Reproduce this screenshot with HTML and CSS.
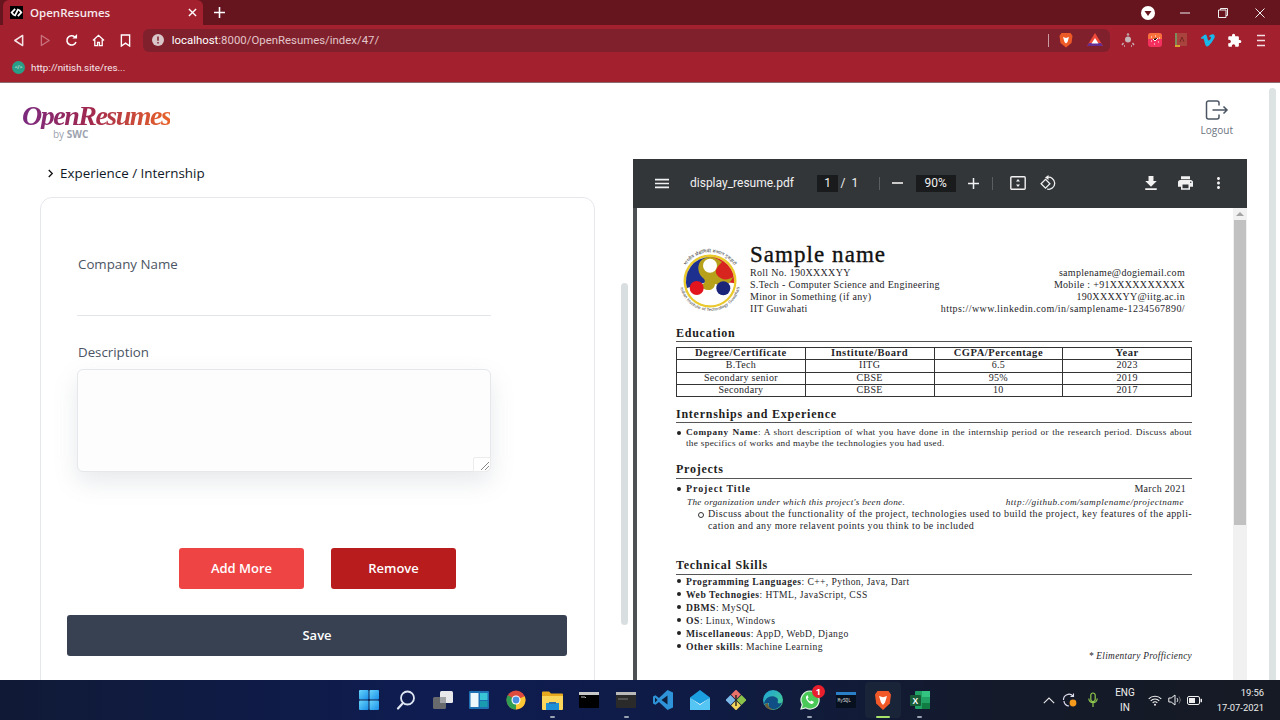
FILE: index.html
```html
<!DOCTYPE html>
<html lang="en">
<head>
<meta charset="utf-8">
<title>OpenResumes</title>
<link rel="stylesheet" href="styles.css">
</head>
<body>
<div class="tabstrip">
  <div class="tab">
    <span class="favicon"><svg viewBox="0 0 14 12" width="13" height="11"><path d="M5.5 2 1.8 6l2.4 3M8.500 10l3.700-4-2.400-3M9 2 5 10" fill="none" stroke="#fff" stroke-width="2"/></svg></span>
    <span class="tab-title">OpenResumes</span>
    <svg class="tab-close" viewBox="0 0 10 10" width="9" height="9"><path d="M1 1l8 8M9 1l-8 8" stroke="#fff" stroke-width="1.500"/></svg>
  </div>
  <svg class="newtab" viewBox="0 0 12 12" width="11" height="11"><path d="M6 0v12M0 6h12" stroke="#fff" stroke-width="1.700"/></svg>
  <div class="window-controls">
    <span class="profile"><svg viewBox="0 0 14 14" width="14" height="14"><circle cx="7" cy="7" r="7" fill="#fff"/><path d="M3.500 5h7L7 10z" fill="#66151f"/></svg></span>
    <span class="winbtn"><svg viewBox="0 0 10 10" width="10" height="10"><path d="M0 5h10" stroke="#eee" stroke-width="1"/></svg></span>
    <span class="winbtn"><svg viewBox="0 0 10 10" width="10" height="10"><path d="M.5 2h7.500v7.500H.5zM2.500 2V.5h7v7H8" fill="none" stroke="#eee" stroke-width="1"/></svg></span>
    <span class="winbtn"><svg viewBox="0 0 10 10" width="10" height="10"><path d="M.5.5l9 9M9.500.5l-9 9" stroke="#eee" stroke-width="1"/></svg></span>
  </div>
</div>

<div class="toolbar">
  <span class="navbtn"><svg viewBox="0 0 12 14" width="11" height="13"><path d="M10.500 1.500v11L2 7z" fill="none" stroke="#f3e4e6" stroke-width="1.700" stroke-linejoin="round"/></svg></span>
  <span class="navbtn"><svg viewBox="0 0 12 14" width="11" height="13"><path d="M1.500 1.500v11L10 7z" fill="none" stroke="#c9727d" stroke-width="1.400" stroke-linejoin="round"/></svg></span>
  <span class="navbtn"><svg viewBox="0 0 14 14" width="13" height="13"><path d="M11.800 8.500A5 5 0 1 1 10.500 3.200" fill="none" stroke="#fff" stroke-width="1.700"/><path d="M8 4.800h5V0z" fill="#fff"/></svg></span>
  <span class="navbtn"><svg viewBox="0 0 14 14" width="13" height="13"><path d="M1 7l6-5.500L13 7M3 6v6.500h3V9h2v3.500h3V6" fill="none" stroke="#fff" stroke-width="1.400"/></svg></span>
  <span class="navbtn"><svg viewBox="0 0 12 14" width="11" height="13"><path d="M1.500 1h9v12L6 9.800 1.500 13z" fill="none" stroke="#fff" stroke-width="1.500"/></svg></span>
  <div class="omnibox">
    <svg class="omni-info" viewBox="0 0 12 12" width="12" height="12"><circle cx="6" cy="6" r="6" fill="#d9c6c9"/><path d="M6 2.500v4.200M6 8v1.500" stroke="#80202c" stroke-width="1.500"/></svg>
    <span class="url"><span class="url-host">localhost</span>:8000/OpenResumes/index/47/</span>
    <span class="omni-sep"></span>
    <svg class="omni-brave" viewBox="0 0 14 16" width="14" height="16"><path d="M2.500 1h9l2 3-1 7L7 15.500 1.500 11l-1-7z" fill="#ee5a25"/><path d="M4 5l3 1 3-1-1.500 5L7 11.500 5.500 10z" fill="#fff"/></svg>
    <svg class="omni-bat" viewBox="0 0 16 14" width="16" height="14"><path d="M8 0l8 13H0z" fill="#ee4a3a"/><path d="M0 13l2-3h12l2 3z" fill="#662d91"/><path d="M8 5l3.500 5.500h-7z" fill="#fff"/></svg>
  </div>
  <span class="ext ext-first"><svg viewBox="0 0 14 14" width="14" height="14"><circle cx="7" cy="6.500" r="3" fill="#c6b8ba"/><circle cx="7" cy="1.500" r="1.300" fill="#b9a4a7"/><path d="M1 12l1.500-2M13 12l-1.500-2M3 13h1M10 13h1" stroke="#c9b7ba" stroke-width="1.300"/></svg></span>
  <span class="ext"><svg viewBox="0 0 14 14" width="14" height="14"><rect width="14" height="14" rx="3" fill="#f4305f"/><path d="M0 3a3 3 0 0 1 3-3h8a3 3 0 0 1 3 3v3H0z" fill="#f8713d"/><path d="M3 4h1M7 3h1M11 5h1M3 8h1M10 9h1M6 11h1M5 6l2 2 3-3" stroke="#fff" stroke-width="1"/></svg></span>
  <span class="ext"><svg viewBox="0 0 12 14" width="12" height="14"><rect width="12" height="13" fill="#a8433e"/><rect width="2" height="13" fill="#7f8a5a"/><path d="M5 9l2-5 2 5" fill="none" stroke="#7a2522" stroke-width="1"/><rect y="12" width="5" height="2" fill="#d9a531"/></svg></span>
  <span class="ext"><svg viewBox="0 0 14 13" width="14" height="13"><path d="M0 3.500C2 2 3.500.5 4.500.5c2 0 1.800 6 3 6 1 0 2.500-2 2.500-3 0-1-1.500-1-2.200-.5C8.500 1 10.500 0 12 .3c2 .4 2.200 2.500 1 4.500-1.500 2.700-5 7.700-7 7.700-2.500 0-2.500-8-4-8-.6 0-1 .5-1.300.7z" fill="#1ab7ea"/></svg></span>
  <span class="ext"><svg viewBox="0 0 24 24" width="15" height="15"><path d="M20.500 11H19V7c0-1.100-.9-2-2-2h-4V3.500a2.500 2.500 0 0 0-5 0V5H4c-1.100 0-2 .9-2 2v3.800h1.500c1.500 0 2.700 1.200 2.700 2.700S5 16.200 3.500 16.200H2V20c0 1.100.9 2 2 2h3.800v-1.500c0-1.500 1.200-2.700 2.700-2.700s2.700 1.200 2.700 2.700V22H17c1.100 0 2-.9 2-2v-4h1.500a2.500 2.500 0 0 0 0-5z" fill="#fff"/></svg></span>
  <span class="ext"><svg viewBox="0 0 8 13" width="8" height="13"><path d="M0 1.500h8M0 6.500h8M0 11.500h8" stroke="#f2dfe1" stroke-width="1.400"/></svg></span>
</div>

<div class="bookmarks">
  <span class="bm-icon">&lt;/&gt;</span>
  <span class="bm-label">http://nitish.site/res...</span>
</div>

<div class="page">
  <div class="page-content">
    <header class="site-header">
      <div class="logo">
        <div class="logo-name">OpenResumes</div>
        <div class="logo-by">by <b>SWC</b></div>
      </div>
      <div class="logout">
        <svg viewBox="0 0 24 20" width="24" height="20"><path d="M12 1H3.500A2 2 0 0 0 1.500 3v14a2 2 0 0 0 2 2H12a2 2 0 0 0 2-2v-2.500M14 5.500V3a2 2 0 0 0-2-2" fill="none" stroke="#4b5563" stroke-width="1.500"/><path d="M7.500 10H22M18.500 6.500 22 10l-3.500 3.500" fill="none" stroke="#4b5563" stroke-width="1.500"/></svg>
        <span>Logout</span>
      </div>
    </header>
    <div class="workspace">
      <section class="form-col">
        <div class="section-title">
          <svg viewBox="0 0 8 10" width="7" height="9"><path d="M2 1l4 4-4 4" fill="none" stroke="#111" stroke-width="1.500"/></svg>
          <span>Experience / Internship</span>
        </div>
        <div class="card">
          <label class="field-label first">Company Name</label>
          <div class="line-input"></div>
          <label class="field-label second">Description</label>
          <div class="desc-wrap">
            <textarea class="desc" aria-label="Description"></textarea>
            <span class="resize-corner"><svg viewBox="0 0 10 10" width="10" height="10"><path d="M1 9 9 1M5 9 9 5" stroke="#888" stroke-width="1"/></svg></span>
          </div>
          <div class="btn-row">
            <button class="btn btn-add">Add More</button>
            <button class="btn btn-remove">Remove</button>
          </div>
          <button class="btn btn-save">Save</button>
        </div>
      </section>
      <div class="form-scroll"></div>
      <section class="viewer">
        <div class="viewer-bar">
          <svg class="vb-menu" viewBox="3 6 18 12" width="14" height="11"><path d="M3 18h18v-2H3v2zm0-5h18v-2H3v2zm0-7v2h18V6H3z" fill="#f1f1f1"/></svg>
          <span class="vb-title">display_resume.pdf</span>
          <span class="vb-page">1</span>
          <span class="vb-slash">/</span>
          <span class="vb-total">1</span>
          <span class="vb-sep sep-a"></span>
          <svg class="vb-minus" viewBox="0 0 11 2" width="11" height="2"><path d="M0 1h11" stroke="#f1f1f1" stroke-width="1.600"/></svg>
          <span class="vb-zoom">90%</span>
          <svg class="vb-plus" viewBox="0 0 11 11" width="11" height="11"><path d="M0 5.500h11M5.500 0v11" stroke="#f1f1f1" stroke-width="1.500"/></svg>
          <span class="vb-sep sep-b"></span>
          <svg class="vb-fit" viewBox="0 0 16 14" width="16" height="14"><rect x=".8" y=".8" width="14.400" height="12.400" rx="1" fill="none" stroke="#f1f1f1" stroke-width="1.400"/><path d="M8 3l2 2.500H6zM8 11 6 8.500h4z" fill="#f1f1f1"/></svg>
          <svg class="vb-rot" viewBox="0 0 16 16" width="16" height="16"><path d="M7 2.500a6 6 0 1 1 0 11.500" fill="none" stroke="#f1f1f1" stroke-width="1.300"/><path d="M8.500 0v5L5 2.500z" fill="#f1f1f1"/><rect x="2.400" y="5.600" width="6.200" height="6.200" transform="rotate(45 5.500 8.700)" fill="none" stroke="#f1f1f1" stroke-width="1.300"/></svg>
          <svg class="vb-down" viewBox="5 3 14 17" width="12" height="14"><path d="M19 9h-4V3H9v6H5l7 7 7-7zM5 18v2h14v-2H5z" fill="#f1f1f1"/></svg>
          <svg class="vb-print" viewBox="2 3 20 18" width="15" height="14"><path d="M19 8H5c-1.660 0-3 1.340-3 3v6h4v4h12v-4h4v-6c0-1.660-1.340-3-3-3zm-3 11H8v-5h8v5zm3-7c-.55 0-1-.45-1-1s.45-1 1-1 1 .45 1 1-.45 1-1 1zm-1-9H6v4h12V3z" fill="#f1f1f1"/></svg>
          <svg class="vb-more" viewBox="10 4 4 16" width="3" height="12"><path d="M12 8c1.100 0 2-.9 2-2s-.9-2-2-2-2 .9-2 2 .9 2 2 2zm0 2c-1.100 0-2 .9-2 2s.9 2 2 2 2-.9 2-2-.9-2-2-2zm0 6c-1.100 0-2 .9-2 2s.9 2 2 2 2-.9 2-2-.9-2-2-2z" fill="#f1f1f1"/></svg>
        </div>
        <div class="viewer-body">
          <article class="sheet">
            <div class="cv-head">
              <svg class="cv-logo" viewBox="0 0 66 66" width="66" height="66">
                <defs>
                  <path id="ring-top" d="M5 41A29 29 0 1 1 61 41"/>
                  <path id="ring-bottom" d="M3 38A30.500 30.500 0 0 0 63 38"/>
                </defs>
                <text class="cv-logo-text" text-anchor="middle"><textPath href="#ring-top" startOffset="50%">भारतीय प्रौद्योगिकी संस्थान गुवाहाटी</textPath></text>
                <text class="cv-logo-text" text-anchor="middle"><textPath href="#ring-bottom" startOffset="50%">Indian Institute of Technology Guwahati</textPath></text>
                <circle cx="33" cy="33" r="26.500" fill="#e9c92b"/>
                <circle cx="33" cy="33" r="24" fill="#fff"/>
                <path d="M33 9A24 24 0 0 1 57 35L33 33z" fill="#d8241f"/>
                <path d="M33 9A24 24 0 0 0 10 40L33 33z" fill="#1d2f8f"/>
                <path d="M10 40A24 24 0 0 0 57 35C52 47 39 47 33 39 27 47 15 47 10 40z" fill="#fff"/>
                <path d="M33 9C19 10 19 24 26 30 30 33 27 38 21 36 27 44 37 44 38 36 46 39 53 37 56 29 50 33 44 32 40 27 36 22 43 16 45 14 41 11 37 9 33 9z" fill="#b7a11a"/>
                <circle cx="33" cy="17.700" r="7" fill="#fff"/>
                <circle cx="19.700" cy="40" r="7" fill="#e2141d"/>
                <circle cx="46.300" cy="40.300" r="7" fill="#1a2478"/>
              </svg>
              <div class="cv-id">
                <h1 class="cv-name">Sample name</h1>
                <div class="cv-rows">
                  <div class="cv-row"><span>Roll No. 190XXXXYY</span><span>samplename@dogiemail.com</span></div>
                  <div class="cv-row"><span>S.Tech - Computer Science and Engineering</span><span>Mobile : +91XXXXXXXXXX</span></div>
                  <div class="cv-row"><span>Minor in Something (if any)</span><span>190XXXXYY@iitg.ac.in</span></div>
                  <div class="cv-row"><span>IIT Guwahati</span><span class="cv-link">https://www.linkedin.com/in/samplename-1234567890/</span></div>
                </div>
              </div>
            </div>

            <h2 class="cv-h edu">Education</h2>
            <table class="cv-table">
              <tr><th>Degree/Certificate</th><th>Institute/Board</th><th>CGPA/Percentage</th><th>Year</th></tr>
              <tr><td>B.Tech</td><td>IITG</td><td>6.5</td><td>2023</td></tr>
              <tr><td>Secondary senior</td><td>CBSE</td><td>95%</td><td>2019</td></tr>
              <tr><td>Secondary</td><td>CBSE</td><td>10</td><td>2017</td></tr>
            </table>

            <h2 class="cv-h intern">Internships and Experience</h2>
            <div class="cv-item"><span class="line-just"><b>Company Name</b>: A short description of what you have done in the internship period or the research period. Discuss about</span><span class="line-plain">the specifics of works and maybe the technologies you had used.</span></div>

            <h2 class="cv-h proj">Projects</h2>
            <div class="cv-item first-proj"><div class="cv-row pr6"><b class="proj-title">Project Title</b><span>March 2021</span></div></div>
            <div class="cv-org"><i>The organization under which this project's been done.</i><i class="org-link">http://github.com/samplename/projectname</i></div>
            <div class="cv-sub"><span class="line-plain">Discuss about the functionality of the project, technologies used to build the project, key features of the appli-</span><span class="line-plain">cation and any more relavent points you think to be included</span></div>

            <h2 class="cv-h skills">Technical Skills</h2>
            <ul class="cv-skills">
              <li><b>Programming Languages</b>: C++, Python, Java, Dart</li>
              <li><b>Web Technogies</b>: HTML, JavaScript, CSS</li>
              <li><b>DBMS</b>: MySQL</li>
              <li><b>OS</b>: Linux, Windows</li>
              <li><b>Miscellaneous</b>: AppD, WebD, Django</li>
              <li><b>Other skills</b>: Machine Learning</li>
            </ul>
            <div class="cv-note"><i>* Elimentary Profficiency</i></div>
          </article>
          <div class="viewer-scroll">
            <span class="vs-arrow"></span>
            <span class="vs-thumb"></span>
          </div>
        </div>
      </section>
    </div>
  </div>
  <div class="page-scroll"></div>
</div>

<footer class="taskbar">
  <div class="task-icons">
    <span class="ti"><svg viewBox="0 0 20 20" width="20" height="20"><defs><linearGradient id="win" x1="0" y1="0" x2="1" y2="1"><stop offset="0" stop-color="#67d5fb"/><stop offset="1" stop-color="#1a8ee8"/></linearGradient></defs><rect width="9.500" height="9.500" rx="1" fill="url(#win)"/><rect x="10.500" width="9.500" height="9.500" rx="1" fill="url(#win)"/><rect y="10.500" width="9.500" height="9.500" rx="1" fill="url(#win)"/><rect x="10.500" y="10.500" width="9.500" height="9.500" rx="1" fill="url(#win)"/></svg></span>
    <span class="ti"><svg viewBox="0 0 20 20" width="20" height="20"><circle cx="11.500" cy="8" r="6.500" fill="none" stroke="#dfe6f2" stroke-width="1.800"/><path d="M7 13l-5 5.500" stroke="#dfe6f2" stroke-width="2.200" stroke-linecap="round"/></svg></span>
    <span class="ti"><svg viewBox="0 0 20 20" width="20" height="20"><rect x="0" y="7" width="13" height="12" rx="1.500" fill="#68696d"/><rect x="7" y="1" width="13" height="12" rx="1.500" fill="#e9e9ec"/><rect x="7" y="7" width="6" height="6" fill="#a3a4a8"/></svg></span>
    <span class="ti"><svg viewBox="0 0 20 20" width="20" height="20"><rect y="1" width="20" height="18" rx="1" fill="#1f6fb5"/><rect x="1.500" y="3" width="8" height="14" fill="#eef6fc"/><rect x="11" y="3" width="7.500" height="7" fill="#38c6d6"/><rect x="11" y="11" width="7.500" height="6" fill="#1a9cb0"/></svg></span>
    <span class="ti"><svg viewBox="0 0 20 20" width="20" height="20"><circle cx="10" cy="10" r="9.500" fill="#dd4b3e"/><path d="M10 10 18.700 6.200A9.500 9.500 0 0 1 10 19.500z" fill="#fcc934"/><path d="M10 10 10 19.500A9.500 9.500 0 0 1 1.800 5.200z" fill="#2f9e52"/><circle cx="10" cy="10" r="4.500" fill="#fff"/><circle cx="10" cy="10" r="3.400" fill="#4a90e2"/></svg></span>
    <span class="ti ti-run"><svg viewBox="0 0 21 20" width="21" height="20"><path d="M0 2.500a1 1 0 0 1 1-1h6l2 2h11a1 1 0 0 1 1 1V8H0z" fill="#e8a91e"/><path d="M0 6h21v13a1 1 0 0 1-1 1H1a1 1 0 0 1-1-1z" fill="#fbd65a"/><path d="M4 13h13v7H4z" fill="#1c90d6"/><rect x="7" y="12" width="7" height="2" fill="#2f6fa8"/></svg></span>
    <span class="ti"><svg viewBox="0 0 20 16" width="20" height="16"><rect width="20" height="16" rx="1" fill="#000"/><rect width="20" height="3" fill="#c8c8c8"/><path d="M2 5h4M6 5l1 1" stroke="#bbb" stroke-width="1"/></svg></span>
    <span class="ti ti-run"><svg viewBox="0 0 20 16" width="20" height="16"><rect width="20" height="16" rx="1" fill="#2a2a2a"/><rect width="20" height="3" fill="#b9b9b9"/><path d="M2 7h10" stroke="#777" stroke-width="1"/></svg></span>
    <span class="ti"><svg viewBox="0 0 20 20" width="20" height="20"><path d="M14.500 0 20 2.500v15L14.500 20 6 12l-3.500 2.800L0 13.500v-7L2.500 5.200 6 8z" fill="#2e93d8"/><path d="M14.500 5.500v9L8.500 10z" fill="#0f1c3a"/><path d="M2 7.500 4.500 10 2 12.500z" fill="#0f1c3a"/></svg></span>
    <span class="ti"><svg viewBox="0 0 20 20" width="20" height="20"><path d="M0 7.500 10 0l10 7.500V20H0z" fill="#1c9fe0"/><path d="M0 8l10 7 10-7v12H0z" fill="#55c5f3"/><path d="M0 8l10 6 10-6-10 7z" fill="#fff"/></svg></span>
    <span class="ti"><svg viewBox="0 0 20 20" width="20" height="20"><rect x="6.500" y="1" width="7" height="7" transform="rotate(45 10 4.500)" fill="#e8726b"/><rect x="1" y="6.500" width="7" height="7" transform="rotate(45 4.500 10)" fill="#7ab8ea"/><rect x="12" y="6.500" width="7" height="7" transform="rotate(45 15.500 10)" fill="#8bc34a"/><rect x="6.500" y="12" width="7" height="7" transform="rotate(45 10 15.500)" fill="#f2d45c"/><path d="M10 5v11" stroke="#222" stroke-width="1.400"/></svg></span>
    <span class="ti"><svg viewBox="0 0 20 20" width="20" height="20"><defs><linearGradient id="edge" x1="0" y1="0" x2="1" y2="1"><stop offset="0" stop-color="#1da1d8"/><stop offset="1" stop-color="#4bd28a"/></linearGradient></defs><circle cx="10" cy="10" r="10" fill="url(#edge)"/><path d="M1 14C2 7 9 4 14 8c2 2 0 4 1 5 1 .8 3 .5 4-1-1 5-6 8-10 7-3-.8-4-3-3-6-2 0-4 .5-5 1z" fill="#0f4f85"/><path d="M5 13c0 4 3 6 6 6-5 2-9-2-9-5z" fill="#6c5d3a"/></svg></span>
    <span class="ti ti-run"><svg viewBox="0 0 20 20" width="20" height="20"><path d="M10 1a9 9 0 0 0-7.700 13.600L1 19l4.600-1.200A9 9 0 1 0 10 1z" fill="#4ac959" stroke="#e9f5e9" stroke-width="1.200"/><path d="M7 5.500c-1.500 1-1.500 3 .5 5.500s4 3.500 5.500 2.500l1-1.500-2.500-1.500-1 1c-1 0-3-2-3-3l1-1-1-2.500z" fill="#fff"/></svg><span class="badge">1</span></span>
    <span class="ti"><svg viewBox="0 0 20 16" width="20" height="16"><rect width="20" height="16" fill="#06101e"/><rect width="20" height="3" fill="#2a7fc9"/><text class="mysql" x="1.500" y="9.500">MySQL</text></svg></span>
    <span class="ti ti-active"><svg viewBox="0 0 18 20" width="18" height="20"><path d="M3.500 1h11l2.500 3.500-1.200 9L9 20l-6.800-6.500L1 4.500z" fill="#f15a28"/><path d="M5 6l4 1.200L13 6l-2 6.500L9 15l-2-2.500z" fill="#fff"/></svg></span>
    <span class="ti ti-run"><svg viewBox="0 0 20 20" width="20" height="20"><rect x="5" y="1" width="15" height="18" rx="1" fill="#21a366"/><rect x="12" y="1" width="8" height="6" fill="#33c481"/><rect x="12" y="13" width="8" height="6" fill="#107c41"/><rect y="5" width="11" height="11" rx="1" fill="#185c37"/><text class="xl" x="2.500" y="13.500">X</text></svg></span>
  </div>
  <div class="tray">
    <svg class="tr-chev" viewBox="0 0 12 7" width="12" height="7"><path d="M.8 6.200 6 1l5.200 5.200" fill="none" stroke="#e8e8e8" stroke-width="1.100"/></svg>
    <svg class="tr-sync" viewBox="0 0 16 16" width="16" height="16"><path d="M1.500 8a5.500 5.500 0 0 1 9.500-4M13 8" fill="none" stroke="#dde" stroke-width="1.200"/><path d="M2 9a5 5 0 0 0 5 5" fill="none" stroke="#dde" stroke-width="1.200"/><path d="M11.500 1.500v3h-3" fill="none" stroke="#dde" stroke-width="1.100"/><circle cx="11" cy="11" r="3.400" fill="#f59a1d"/></svg>
    <svg class="tr-mic" viewBox="0 0 10 16" width="10" height="16"><rect x="2.800" y="1" width="4.400" height="8.500" rx="2.200" fill="none" stroke="#8fc84e" stroke-width="1.200"/><path d="M.8 6.500a4.200 4.200 0 0 0 8.400 0M5 11v4" fill="none" stroke="#8fc84e" stroke-width="1.200"/></svg>
    <div class="tr-lang"><span>ENG</span><span>IN</span></div>
    <svg class="tr-wifi" viewBox="0 0 14 11" width="14" height="11"><path d="M.7 3.800a9 9 0 0 1 12.600 0M2.700 5.800a6 6 0 0 1 8.600 0M4.700 7.800a3 3 0 0 1 4.600 0" fill="none" stroke="#eee" stroke-width="1.100"/><circle cx="7" cy="9.800" r="1" fill="#eee"/></svg>
    <svg class="tr-vol" viewBox="0 0 15 12" width="15" height="12"><path d="M.8 4v4h2.400L7 11V1L3.200 4z" fill="none" stroke="#eee" stroke-width="1"/><path d="M9 4a3 3 0 0 1 0 4" fill="none" stroke="#eee" stroke-width=".9"/><path d="M11 2.500a5.500 5.500 0 0 1 0 7" fill="none" stroke="#777" stroke-width=".9"/></svg>
    <svg class="tr-bat" viewBox="0 0 15 9" width="15" height="9"><rect x=".5" y=".5" width="12" height="8" rx="1.500" fill="none" stroke="#eee"/><rect x="2" y="2" width="6" height="5" fill="#eee"/><rect x="13.500" y="2.800" width="1.500" height="3.400" fill="#eee"/></svg>
    <div class="tr-clock"><span>19:56</span><span>17-07-2021</span></div>
  </div>
</footer>
</body>
</html>
```

FILE: styles.css
```css
* { box-sizing: border-box; }
html, body { margin: 0; padding: 0; }
body {
  width: 1280px;
  height: 720px;
  overflow: hidden;
  display: flex;
  flex-direction: column;
  background: #fff;
  font-family: "Open Sans", "Liberation Sans", sans-serif;
}

/* browser chrome */
.tabstrip {
  height: 25px;
  flex: none;
  display: flex;
  align-items: center;
  padding-left: 3px;
  background: #66151f;
  color: #fff;
}
.tab {
  width: 200px;
  height: 25px;
  display: flex;
  align-items: center;
  padding: 0 6px 0 7px;
  background: #a3202f;
  border-radius: 6px 6px 0 0;
}
.favicon {
  width: 13px;
  height: 13px;
  background: #000;
  display: flex;
  align-items: center;
  justify-content: center;
}
.tab-title { margin-left: 7px; font-size: 11.5px; font-weight: 600; flex: 1; color: #f7eaec; }
.newtab { margin-left: 11px; }
.window-controls { margin-left: auto; padding-right: 1px; display: flex; align-items: center; }
.profile { display: flex; margin-right: 12px; }
.winbtn { width: 37.500px; display: flex; justify-content: center; }
.toolbar {
  height: 30px;
  flex: none;
  display: flex;
  align-items: center;
  padding-left: 5px;
  background: #a3202f;
}
.navbtn { width: 26.750px; display: flex; justify-content: center; }
.omnibox {
  width: 967px;
  height: 23px;
  margin-left: 4px;
  display: flex;
  align-items: center;
  padding-left: 9px;
  background: #80202c;
  border-radius: 6px;
}
.url { margin-left: 8px; font-family: Roboto, sans-serif; font-size: 11.400px; color: #e2c5c9; }
.url-host { color: #fff; }
.omni-sep { margin-left: auto; width: 1px; height: 13px; background: #c99ca2; }
.omni-brave { margin-left: 10px; }
.omni-bat { margin-left: 14px; margin-right: 7px; }
.ext { width: 26.500px; display: flex; justify-content: center; }
.ext-first { margin-left: 5px; }
.bookmarks {
  height: 28px;
  flex: none;
  display: flex;
  align-items: center;
  padding: 0 0 2px 12px;
  background: #a3202f;
  border-bottom: 1px solid #8d6a70;
  color: #f7eaec;
}
.bm-icon {
  width: 13px;
  height: 13px;
  border-radius: 50%;
  background: #2a9d86;
  color: #fff;
  font-size: 5px;
  line-height: 13px;
  text-align: center;
}
.bm-label { margin-left: 6px; font-family: Roboto, sans-serif; font-size: 9.800px; }

/* page */
.page { flex: 1; min-height: 0; display: flex; overflow: hidden; }
.page-content { width: 1269px; flex: none; }
.page-scroll {
  width: 7px;
  margin-top: 5px;
  background: #dde2e3;
  border-radius: 4px 4px 0 0;
}
.site-header {
  height: 76px;
  display: flex;
  justify-content: space-between;
  padding: 20px 36px 0 22px;
}
.logo-name {
  font-family: "Liberation Serif", serif;
  font-style: italic;
  font-weight: 700;
  font-size: 28px;
  line-height: 26px;
  letter-spacing: -1.500px;
  background: linear-gradient(90deg, #7b2a80 0%, #a0284f 45%, #e8632a 100%);
  -webkit-background-clip: text;
  background-clip: text;
  color: transparent;
}
.logo-by { margin: 0 0 0 31px; font-size: 10px; line-height: 11px; color: #9ca3af; }
.logout {
  display: flex;
  flex-direction: column;
  align-items: center;
  margin-top: -3px;
  font-size: 10px;
  line-height: 14px;
  color: #6b7280;
  gap: 3px;
  padding-top: 0;
}
.workspace { display: flex; height: 521px; }
.form-col { width: 555px; margin-left: 40px; flex: none; }
.section-title {
  height: 38px;
  padding: 4px 0 0 7px;
  display: flex;
  align-items: flex-start;
  gap: 6px;
  font-size: 13.400px;
  line-height: 20px;
  font-weight: 500;
  color: #111827;
}
.section-title svg { margin-top: 6px; }
.card {
  height: 520px;
  border: 1px solid #e5e7eb;
  border-radius: 12px;
  padding: 0 0 0 36px;
}
.field-label { display: block; padding-left: 1px; font-size: 13.300px; line-height: 20px; color: #4b5563; }
.field-label.first { margin-top: 56px; }
.field-label.second { margin-top: 26px; }
.line-input { width: 414px; height: 42px; border-bottom: 1px solid #e2e5e9; }
.desc-wrap { position: relative; width: 414px; height: 103px; margin-top: 7px; }
.desc {
  display: block;
  width: 414px;
  height: 103px;
  border: 1px solid #e5e7eb;
  border-radius: 6px;
  background: #fdfdfd;
  box-shadow: 0 10px 25px rgba(100, 116, 130, .16);
  outline: none;
  resize: none;
}
.resize-corner {
  position: absolute;
  right: 0;
  bottom: 0;
  width: 18px;
  height: 15px;
  display: flex;
  align-items: flex-end;
  justify-content: flex-end;
  background: #fff;
  border: 1px solid #ececec;
  border-radius: 2px 0 6px 0;
}
.btn {
  display: block;
  height: 41px;
  padding-bottom: 2px;
  border: 0;
  border-radius: 3px;
  color: #fff;
  font-family: "Open Sans", sans-serif;
  font-size: 13px;
  font-weight: 600;
}
.btn-row { display: flex; gap: 27px; margin: 76px 0 0 102px; }
.btn-add { width: 125px; background: #ef4444; }
.btn-remove { width: 125px; background: #b91c1c; }
.btn-save { width: 500px; margin: 26px 0 0 -10px; background: #374151; }
.form-scroll {
  width: 7px;
  height: 342px;
  margin: 124px 5px 0 26px;
  flex: none;
  background: #d9dfe0;
  border-radius: 4px;
}

/* pdf viewer */
.viewer { width: 614px; flex: none; display: flex; flex-direction: column; background: #525659; }
.viewer-bar {
  height: 49px;
  flex: none;
  display: flex;
  align-items: center;
  padding-bottom: 1px;
  background: #323639;
  color: #f1f1f1;
  font-family: Roboto, sans-serif;
  font-size: 12px;
}
.vb-menu { margin-left: 22px; }
.vb-title { margin-left: 21px; width: 127px; }
.vb-page, .vb-zoom {
  height: 17px;
  line-height: 17px;
  background: #191b1c;
  text-align: center;
}
.vb-page { width: 21px; }
.vb-slash { margin-left: 2.500px; }
.vb-total { margin-left: 6px; }
.vb-sep { width: 1px; height: 13px; background: #5a5e61; }
.sep-a { margin-left: 20.500px; }
.vb-minus { margin-left: 12.500px; }
.vb-zoom { width: 40px; margin-left: 12.500px; }
.vb-plus { margin-left: 12.500px; }
.sep-b { margin-left: 13px; }
.vb-fit { margin-left: 16.500px; }
.vb-rot { margin-left: 14px; }
.vb-down { margin-left: 89px; }
.vb-print { margin-left: 21px; }
.vb-more { margin-left: 24px; }
.viewer-body { flex: 1; min-height: 0; display: flex; padding-left: 4px; background: #4d5154; }
.sheet {
  width: 596px;
  flex: none;
  padding: 39px 41px 0 39px;
  background: #fff;
  overflow: hidden;
  font-family: "Liberation Serif", serif;
  font-size: 10px;
  line-height: 12px;
  letter-spacing: .3px;
  color: #26262a;
}
.viewer-scroll {
  width: 14px;
  flex: none;
  display: flex;
  flex-direction: column;
  align-items: center;
  background: #f1f1f1;
}
.vs-arrow {
  margin-top: 4px;
  border-left: 4px solid transparent;
  border-right: 4px solid transparent;
  border-bottom: 4px solid #a3a3a3;
}
.vs-thumb { width: 12px; height: 305px; margin-top: 4px; background: #c1c1c1; }

.cv-head { display: flex; height: 69px; }
.cv-logo { flex: none; margin: 1px 7px 0 1px; }
.cv-logo-text { font-family: "Liberation Sans", "Noto Sans", sans-serif; font-size: 4.300px; fill: #333; letter-spacing: .15px; }
.cv-id { flex: 1; min-width: 0; padding-right: 7px; }
.cv-name {
  margin: -3px 0 0;
  font-size: 23px;
  line-height: 22px;
  font-weight: 400;
  letter-spacing: 1.050px;
  color: #111;
  -webkit-text-stroke: .35px #111;
}
.cv-rows { margin-top: 1px; }
.cv-row { display: flex; justify-content: space-between; white-space: nowrap; }
.cv-link { letter-spacing: .42px; }
.cv-h {
  margin: 0;
  height: 15px;
  font-size: 12px;
  line-height: 13px;
  font-weight: 700;
  letter-spacing: .75px;
  color: #1e1e22;
  border-bottom: 1px solid #555;
}
.cv-h.edu { margin-top: 11px; }
.cv-h.intern { margin-top: 11px; }
.cv-h.proj { margin-top: 13.500px; height: 16px; }
.cv-h.skills { margin-top: 27px; height: 16px; }
.cv-table {
  width: 516px;
  margin-top: 5px;
  border-collapse: collapse;
  table-layout: fixed;
  line-height: 10px;
}
.cv-table th, .cv-table td { padding: 0 0 1.300px; border: 1px solid #333; text-align: center; }
.cv-table th { font-size: 10.500px; letter-spacing: .55px; }
.cv-item, .cv-sub { position: relative; }
.cv-item { margin-top: 3.500px; padding-left: 10px; line-height: 11.500px; font-size: 9.250px; }
.cv-item b { letter-spacing: .6px; }
.cv-item::before {
  content: "";
  position: absolute;
  left: 1px;
  top: 4px;
  width: 4px;
  height: 4px;
  border-radius: 50%;
  background: #222;
}
.line-just { display: block; text-align: justify; text-align-last: justify; white-space: nowrap; }
.line-plain { display: block; white-space: nowrap; }
.first-proj { margin-top: 3.500px; line-height: 12px; font-size: 10px; }
.first-proj .proj-title { letter-spacing: .9px; }
.pr6 { padding-right: 6px; }
.cv-org {
  display: flex;
  justify-content: space-between;
  margin: 1px 8px 0 11px;
  font-size: 9.200px;
  line-height: 12px;
}
.org-link { letter-spacing: .45px; }
.cv-sub { margin: 0 0 0 32px; line-height: 12px; font-size: 10px; letter-spacing: .39px; }
.cv-sub::before {
  content: "";
  position: absolute;
  left: -10px;
  top: 4px;
  width: 4px;
  height: 4px;
  border: .8px solid #333;
  border-radius: 50%;
}
.cv-skills {
  list-style: none;
  margin: .500px 0 0;
  padding: 0 0 0 10px;
  font-size: 9.600px;
  line-height: 13px;
  letter-spacing: .4px;
}
.cv-skills b { letter-spacing: .55px; }
.cv-skills li { position: relative; }
.cv-skills li::before {
  content: "";
  position: absolute;
  left: -9px;
  top: 4px;
  width: 4px;
  height: 4px;
  border-radius: 50%;
  background: #222;
}
.cv-note { text-align: right; margin-top: -3.500px; font-size: 9.300px; }

/* taskbar */
.taskbar {
  height: 40px;
  flex: none;
  display: flex;
  align-items: center;
  background: linear-gradient(90deg, #101a36 0%, #0e1c52 35%, #0f1b44 55%, #141a2a 78%, #151a24 100%);
  color: #eee;
}
.task-icons { display: flex; margin-left: 351px; }
.ti {
  position: relative;
  width: 36.700px;
  height: 36px;
  display: flex;
  align-items: center;
  justify-content: center;
}
.ti-run::after, .ti-active::after {
  content: "";
  position: absolute;
  bottom: 0;
  left: 50%;
  width: 5px;
  height: 2px;
  margin-left: -2.500px;
  border-radius: 1px;
  background: #9aa3b2;
}
.ti-active { background: #1a2438; border-radius: 4px; }
.ti-active::after { width: 14px; margin-left: -7px; background: #a7e36a; }
.badge {
  position: absolute;
  top: 3px;
  right: 3px;
  width: 13px;
  height: 13px;
  border-radius: 50%;
  background: #e81f2d;
  color: #fff;
  font: 700 9px/13px "Open Sans", sans-serif;
  text-align: center;
}
.mysql { font: 4.500px "Liberation Mono", monospace; fill: #ddd; }
.xl { font: 700 8.500px "Liberation Sans", sans-serif; fill: #fff; }
.tray { display: flex; align-items: center; margin-left: 105px; flex: 1; font-family: Roboto, sans-serif; }
.tr-sync { margin-left: 7px; }
.tr-mic { margin-left: 10px; }
.tr-lang {
  width: 30px;
  margin-left: 12px;
  display: flex;
  flex-direction: column;
  align-items: center;
  font-size: 10px;
  line-height: 15px;
}
.tr-wifi { margin-left: 8px; }
.tr-vol { margin-left: 6px; }
.tr-bat { margin-left: 4px; }
.tr-clock {
  margin-left: auto;
  margin-right: 16px;
  display: flex;
  flex-direction: column;
  align-items: flex-end;
  font-size: 9.400px;
  line-height: 15px;
}
```
